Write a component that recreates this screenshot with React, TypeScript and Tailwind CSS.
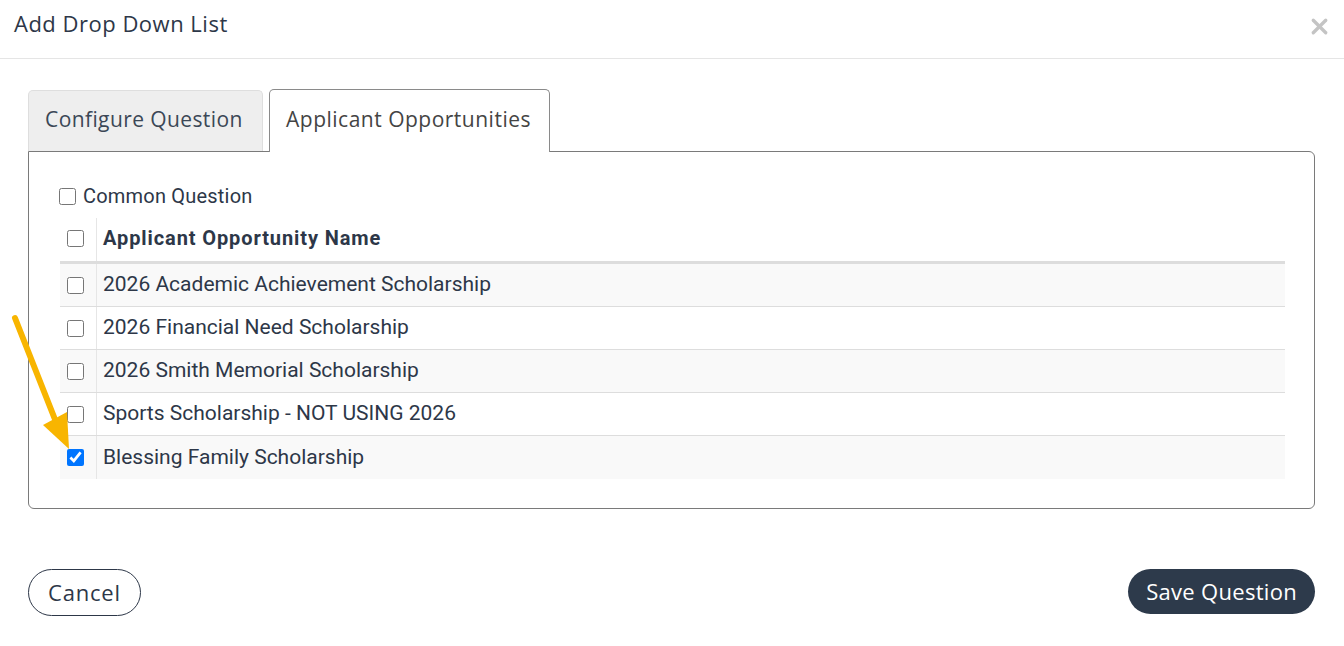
import { X } from "lucide-react";

const rows = [
  { name: "2026 Academic Achievement Scholarship", checked: false },
  { name: "2026 Financial Need Scholarship", checked: false },
  { name: "2026 Smith Memorial Scholarship", checked: false },
  { name: "Sports Scholarship - NOT USING 2026", checked: false },
  { name: "Blessing Family Scholarship", checked: true },
];

const heading = { fontFamily: "'Open Sans', 'Noto Sans', sans-serif" };

const App = () => {
  return (
    <div className="relative w-[1344px] h-[646px] bg-white text-[#2d3748] overflow-hidden" style={{ fontFamily: "Roboto, sans-serif" }}>
      {/* header */}
      <div className="flex items-center justify-between h-[59px] border-b border-[#e5e5e5] pl-[14px] pr-[14px]">
        <h1 className="text-[22px] pb-[12px] tracking-[0.5px]" style={heading}>Add Drop Down List</h1>
        <X size={25} strokeWidth={3.2} className="text-[#c4c4c4] -mt-[6px] -mr-[2px]" />
      </div>

      <div className="px-[28px] pr-[29px] pt-[30px]">
        {/* tabs */}
        <div className="flex items-end gap-[6px]">
          <div className="h-[61px] w-[235px] flex items-center pl-[16px] pb-[3px] bg-[#eeeeee] border border-b-0 border-[#dedede] rounded-t-[5px] text-[21px] text-[#3b4756] tracking-[0.4px]" style={heading}>
            Configure Question
          </div>
          <div className="h-[63px] w-[281px] -mb-px flex items-center pl-[16px] pb-[3px] bg-white border border-b-0 border-[#8a8a8a] rounded-t-[5px] text-[21px] text-[#444] tracking-[0.5px] relative z-10" style={heading}>
            Applicant Opportunities
          </div>
        </div>

        {/* panel */}
        <div className="border border-[#7a7a7a] rounded-b-[6px] rounded-tr-[6px] pl-[31px] pr-[29px] pt-[34px] pb-[29px]">
          <label className="flex items-center gap-[7px] text-[20px] leading-[20px] text-[#2d3748] tracking-[0.2px]">
            <input type="checkbox" className="w-[17px] h-[17px] -ml-px" />
            Common Question
          </label>

          <div className="mt-[12px]">
            <div className="flex h-[46px] border-b-[3px] border-[#dddddd]">
              <div className="w-[37px] flex items-center pl-[7px] pb-[2px] border-r border-[#e6e6e6]">
                <input type="checkbox" className="w-[17px] h-[17px]" />
              </div>
              <div className="flex items-center pl-[6px] pb-[3px] font-bold text-[20px] tracking-[0.9px] text-[#2d3748]">Applicant Opportunity Name</div>
            </div>
            {rows.map((r, i) => (
              <div key={r.name} className={`flex h-[43px] ${i < rows.length - 1 ? "border-b border-[#dddddd]" : ""} ${i % 2 === 0 ? "bg-[#f9f9f9]" : "bg-white"}`}>
                <div className="w-[37px] flex items-center pl-[7px] border-r border-[#e6e6e6]">
                  <input type="checkbox" defaultChecked={r.checked} className="w-[17px] h-[17px] accent-[#0075ff]" />
                </div>
                <div className="flex items-center pl-[6px] text-[21px] text-[#2d3748]">{r.name}</div>
              </div>
            ))}
          </div>
        </div>

        {/* footer */}
        <div className="flex items-center justify-between mt-[60px]">
          <button className="h-[47px] px-[19px] rounded-full border border-[#2d3748] text-[22px] tracking-[0.8px] text-[#2d3748] bg-white" style={heading}>
            Cancel
          </button>
          <button className="h-[45px] px-[18px] rounded-full bg-[#2d3a4b] text-white text-[22px] tracking-[0.3px] -mt-[2px]" style={heading}>
            Save Question
          </button>
        </div>
      </div>

      {/* annotation arrow */}
      <svg className="absolute left-0 top-0 pointer-events-none" width="100" height="470" viewBox="0 0 100 470">
        <line x1="15" y1="318" x2="56" y2="422" stroke="#f8b500" strokeWidth="6" strokeLinecap="round" />
        <polygon points="69,449 43,425 67,412" fill="#f8b500" />
      </svg>
    </div>
  );
};

export default App;
